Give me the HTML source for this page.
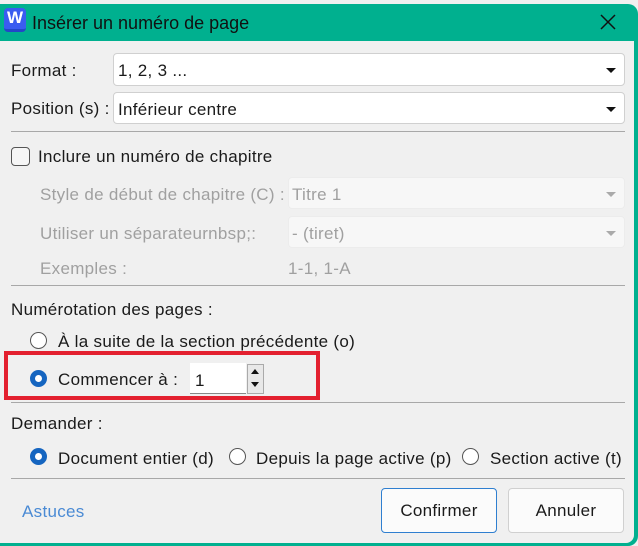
<!DOCTYPE html>
<html><head><meta charset="utf-8"><style>
*{margin:0;padding:0;box-sizing:border-box}
body{width:638px;height:546px;background:#f0f0f0;font-family:"Liberation Sans",sans-serif;font-size:17px;letter-spacing:.3px;color:#1a1a1a;position:relative;overflow:hidden}
.a{position:absolute;white-space:nowrap;line-height:20px}
.g{color:#a0a0a0}
.combo{position:absolute;background:#fff;border:1px solid #d0d0d0;border-radius:4px}
.combo.d{background:#f7f7f7;border-color:#ececec}
.arr{position:absolute;right:8px;top:14px;width:0;height:0;border-left:5px solid transparent;border-right:5px solid transparent;border-top:5px solid #111}
.d .arr{border-top-color:#aaa}
.sep{position:absolute;left:11px;width:614px;height:1px;background:#a8a8a8}
.rad{position:absolute;width:17px;height:17px;border-radius:50%;border:1px solid #555;background:#fff}
.rad.on{border:5px solid #1565c0}
.btn{position:absolute;top:488px;width:116px;height:45px;border:1px solid #d0d0d0;border-radius:4px;background:#fbfbfb;text-align:center;line-height:43px}
</style></head><body>
<div style="position:absolute;left:0;top:4px;width:638px;height:542px;background:#00b08f;border-radius:0 10px 10px 0"></div>
<div style="position:absolute;left:0;top:41px;width:634px;height:502px;background:#f0f0f0;border-radius:0 0 8px 0"></div>
<div style="position:absolute;left:4px;top:8px;width:22px;height:24px;background:#3a5cf0;border-radius:4px;border-bottom:3px solid #2347c8;color:#fff;font-weight:bold;font-size:17px;text-align:center;line-height:20px;letter-spacing:0">W</div>
<div class="a" style="left:32px;top:13px;font-size:18px;letter-spacing:0;color:#111">Insérer un numéro de page</div>
<svg style="position:absolute;left:600px;top:14px" width="16" height="16"><path d="M1 1L15 15M15 1L1 15" stroke="#111" stroke-width="1.5"/></svg>

<div class="a" style="left:11px;top:61px">Format :</div>
<div class="combo" style="left:113px;top:53px;width:512px;height:33px"><div class="a" style="left:4px;top:7px">1, 2, 3 ...</div><div class="arr"></div></div>
<div class="a" style="left:11px;top:99px">Position (s) :</div>
<div class="combo" style="left:113px;top:92px;width:512px;height:32px"><div class="a" style="left:4px;top:7px">Inférieur centre</div><div class="arr"></div></div>
<div class="sep" style="top:131px"></div>

<div style="position:absolute;left:11px;top:147px;width:19px;height:19px;border:1px solid #555;border-radius:4px;background:#f6f6f6"></div>
<div class="a" style="left:38px;top:147px">Inclure un numéro de chapitre</div>
<div class="a g" style="left:40px;top:185px">Style de début de chapitre (C) :</div>
<div class="combo d" style="left:288px;top:177px;width:337px;height:32px"><div class="a g" style="left:3px;top:7px">Titre 1</div><div class="arr"></div></div>
<div class="a g" style="left:40px;top:224px">Utiliser un séparateurnbsp;:</div>
<div class="combo d" style="left:288px;top:216px;width:337px;height:32px"><div class="a g" style="left:3px;top:7px">- (tiret)</div><div class="arr"></div></div>
<div class="a g" style="left:40px;top:259px">Exemples :</div>
<div class="a g" style="left:288px;top:259px">1-1, 1-A</div>
<div class="sep" style="top:285px"></div>

<div class="a" style="left:11px;top:300px">Numérotation des pages :</div>
<div class="rad" style="left:30px;top:332px"></div>
<div class="a" style="left:58px;top:332px">À la suite de la section précédente (o)</div>
<div class="sep" style="top:402px"></div>
<div style="position:absolute;left:4px;top:351px;width:316px;height:49px;border:4px solid #e3202f"></div>
<div class="rad on" style="left:30px;top:370px"></div>
<div class="a" style="left:58px;top:370px">Commencer à :</div>
<div style="position:absolute;left:190px;top:363px;width:56px;height:31px;background:#fff;border-bottom:1px solid #888"></div>
<div class="a" style="left:195px;top:371px">1</div>
<div style="position:absolute;left:247px;top:364px;width:17px;height:30px;border:1px solid #aaa;background:#e8e8e8"></div>
<div style="position:absolute;left:251px;top:369px;border-left:4px solid transparent;border-right:4px solid transparent;border-bottom:5px solid #111"></div>
<div style="position:absolute;left:251px;top:382px;border-left:4px solid transparent;border-right:4px solid transparent;border-top:5px solid #111"></div>

<div class="a" style="left:11px;top:414px">Demander :</div>
<div class="rad on" style="left:30px;top:448px"></div>
<div class="a" style="left:58px;top:449px">Document entier (d)</div>
<div class="rad" style="left:229px;top:448px"></div>
<div class="a" style="left:256px;top:449px">Depuis la page active (p)</div>
<div class="rad" style="left:462px;top:448px"></div>
<div class="a" style="left:490px;top:449px">Section active (t)</div>
<div class="sep" style="top:478px"></div>

<div class="a" style="left:22px;top:502px;color:#4a8ad4">Astuces</div>
<div class="btn" style="left:381px;border-color:#2f7fd0">Confirmer</div>
<div class="btn" style="left:508px">Annuler</div>
</body></html>
